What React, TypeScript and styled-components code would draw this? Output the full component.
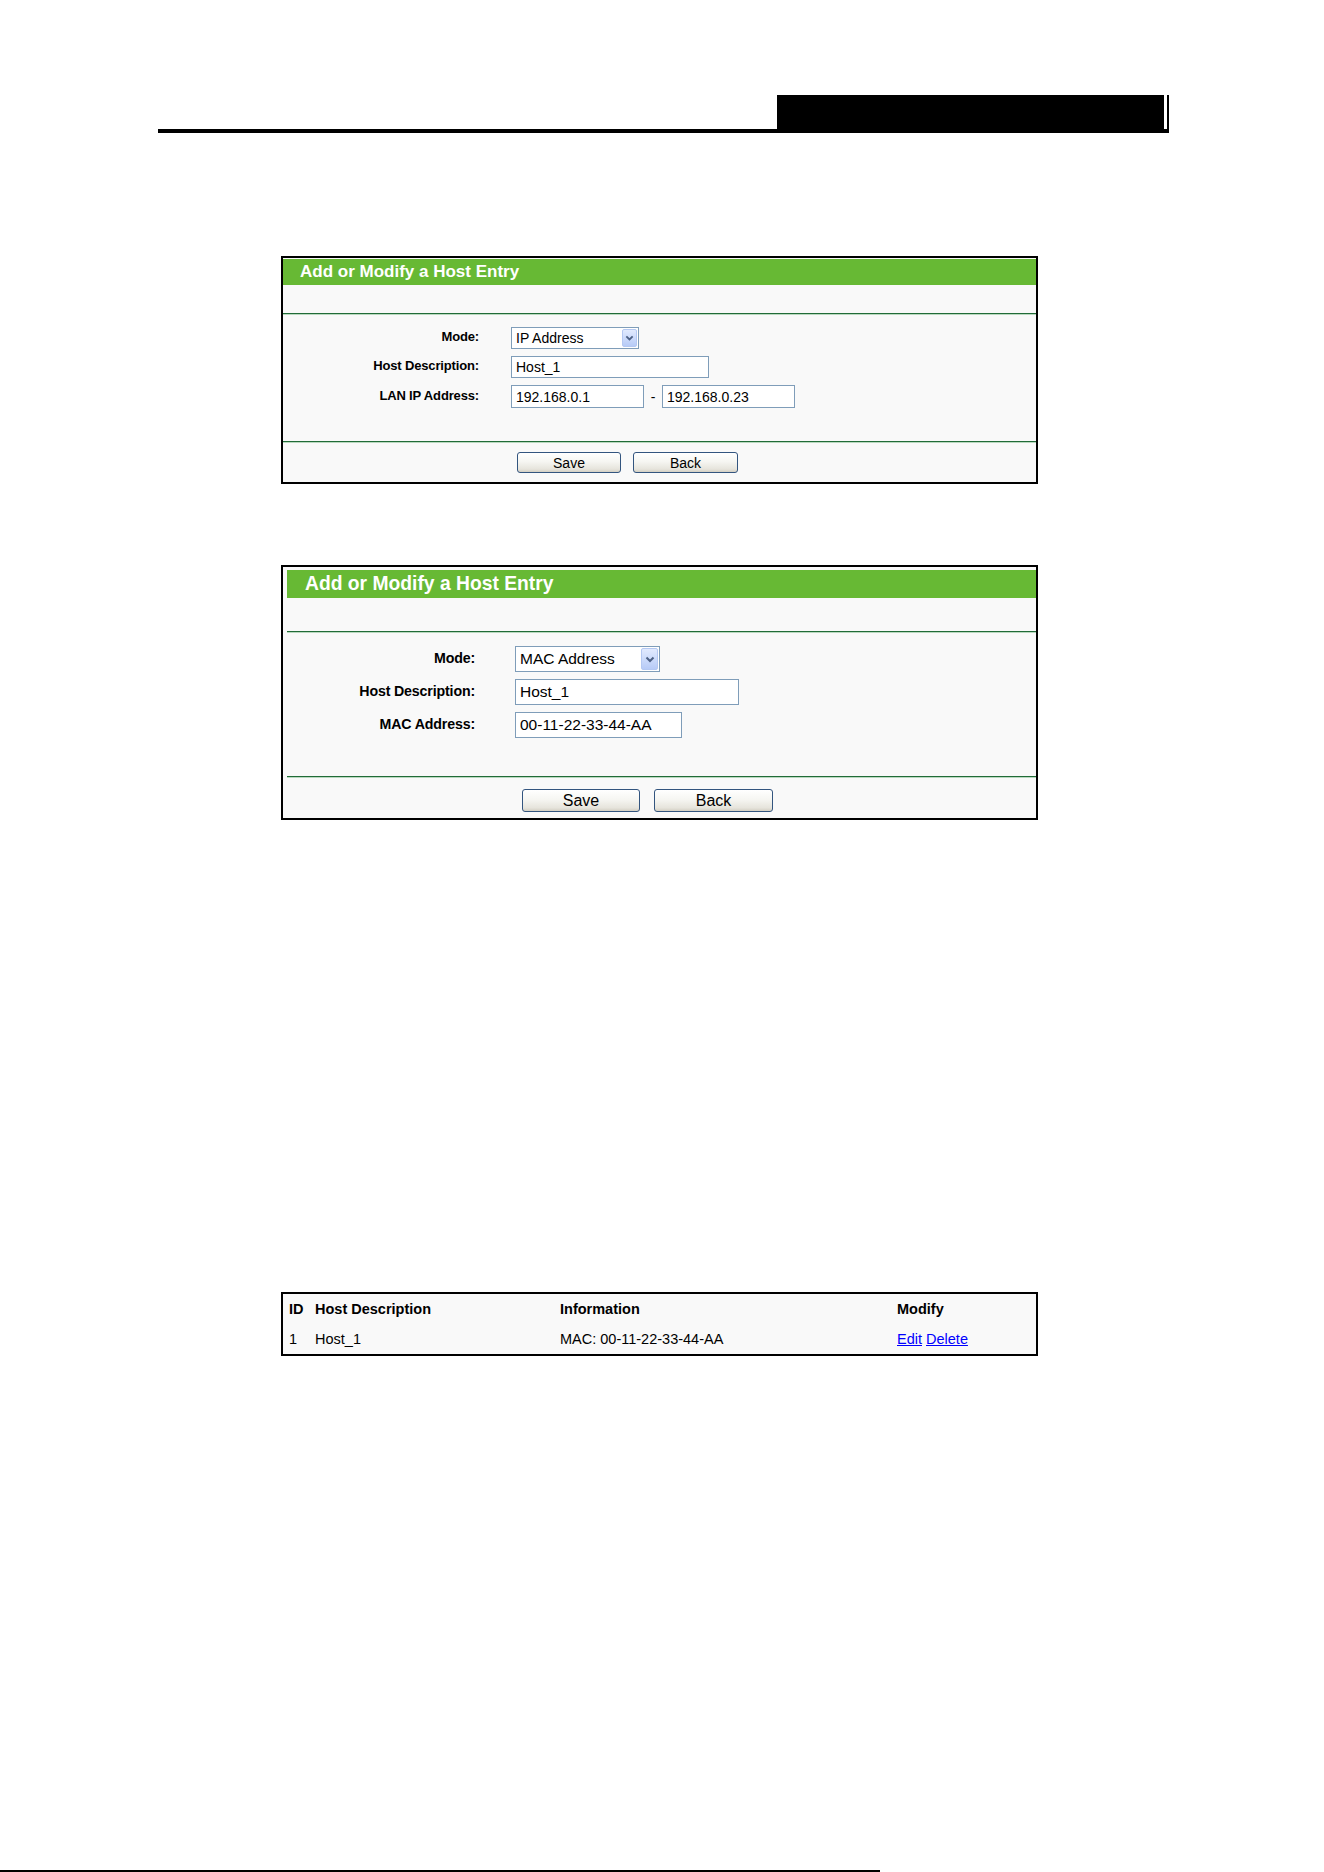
import styled, { createGlobalStyle } from 'styled-components';

const GlobalStyle = createGlobalStyle`
  html, body {
    margin: 0;
    padding: 0;
    background: #fff;
  }
  body {
    font-family: "Liberation Sans", Arial, sans-serif;
    color: #000;
  }
`;

const Page = styled.div`
  width: 1324px;
  height: 1872px;
  overflow: hidden;
  display: flex;
  flex-direction: column;
`;

const Header = styled.header`
  margin: 95px 0 0 158px;
  width: 1011px;
  height: 34px;
  border-bottom: 4px solid #000;
  display: flex;
  justify-content: flex-end;
`;

const HeaderBlock = styled.div`
  width: 387px;
  background: #000;
`;

const HeaderTick = styled.div`
  width: 2px;
  margin-left: 3px;
  background: #000;
`;

const Panel = styled.section<{ $top: number; $pad: string }>`
  margin: ${p => p.$top}px 0 0 281px;
  width: 757px;
  box-sizing: border-box;
  border: 2px solid #000;
  background: #f9f9f9;
  padding: ${p => p.$pad};
`;

const TitleBar = styled.div<{ $h: number; $fs: number; $pl: number }>`
  height: ${p => p.$h}px;
  padding-left: ${p => p.$pl}px;
  background: #67b934;
  color: #fff;
  font-weight: 700;
  font-size: ${p => p.$fs}px;
  display: flex;
  align-items: center;
`;

const Spacer = styled.div<{ $h: number }>`
  height: ${p => p.$h}px;
`;

const Rule = styled.div`
  height: 1px;
  border-top: 1px solid #216b38;
  background: #b9d9bf;
`;

const Form = styled.div<{ $pt: number; $pb: number }>`
  padding: ${p => p.$pt}px 0 ${p => p.$pb}px;
  display: flex;
  flex-direction: column;
  gap: 7px;
`;

const Row = styled.div<{ $label: number; $gap: number }>`
  display: grid;
  grid-template-columns: ${p => p.$label}px auto;
  column-gap: ${p => p.$gap}px;
  align-items: center;
`;

const Label = styled.div<{ $fs: number }>`
  padding-bottom: 3px;
  text-align: right;
  font-weight: 700;
  font-size: ${p => p.$fs}px;
  letter-spacing: -0.15px;
`;

const Controls = styled.div`
  display: flex;
  align-items: center;
`;

const Field = styled.input<{ $w: number; $h: number; $fs: number }>`
  box-sizing: border-box;
  width: ${p => p.$w}px;
  height: ${p => p.$h}px;
  margin: 0;
  padding: 0 0 0 4px;
  border: 1px solid #7f9db9;
  background: #fff;
  font-family: inherit;
  font-size: ${p => p.$fs}px;
  color: #000;
  outline: none;
`;

const Dash = styled.span<{ $fs: number }>`
  width: 18px;
  text-align: center;
  font-size: ${p => p.$fs}px;
`;

const Select = styled.div<{ $w: number; $h: number; $fs: number }>`
  box-sizing: border-box;
  width: ${p => p.$w}px;
  height: ${p => p.$h}px;
  border: 1px solid #7f9db9;
  background: #fff;
  padding: 1px 1px 1px 4px;
  display: flex;
  align-items: center;
  justify-content: space-between;
  font-size: ${p => p.$fs}px;
`;

const DropButton = styled.span<{ $w: number }>`
  align-self: stretch;
  width: ${p => p.$w}px;
  box-sizing: border-box;
  border: 1px solid #b4c8f2;
  border-radius: 2px;
  background: linear-gradient(#e1eafe, #b7cbf7);
  display: flex;
  align-items: center;
  justify-content: center;
`;

const ButtonBar = styled.div<{ $pad: string; $gap: number }>`
  padding: ${p => p.$pad};
  display: flex;
  gap: ${p => p.$gap}px;
`;

const Button = styled.button<{ $w: number; $h: number; $fs: number }>`
  box-sizing: border-box;
  width: ${p => p.$w}px;
  height: ${p => p.$h}px;
  padding: 0;
  border: 1px solid #33557f;
  border-radius: 3px;
  background: linear-gradient(#ffffff 0%, #f6f6f2 45%, #e6e4dc 85%, #d3cfc3 100%);
  font-family: inherit;
  font-size: ${p => p.$fs}px;
  color: #000;
`;

const Table = styled.div`
  margin: 472px 0 0 281px;
  width: 757px;
  box-sizing: border-box;
  border: 2px solid #000;
  background: #f9f9f9;
  padding-left: 6px;
  font-size: 14.5px;
`;

const TableRow = styled.div<{ $head?: boolean }>`
  display: grid;
  grid-template-columns: 26px 245px 337px 1fr;
  height: 30px;
  align-items: center;
  font-weight: ${p => (p.$head ? 700 : 400)};
`;

const Link = styled.a`
  color: #0000ff;
  text-decoration: underline;
`;

const FooterLine = styled.div`
  margin-top: 514px;
  width: 880px;
  height: 2px;
  background: #000;
`;

const Chevron = ({ size }: { size: number }) => (
  <svg width={size} height={size * 0.7} viewBox="0 0 10 7">
    <path d="M1.5 1.5 L5 5 L8.5 1.5" fill="none" stroke="#4d6185" strokeWidth="2" />
  </svg>
);

type Dim = {
  title: number;
  titleH: number;
  titlePl: number;
  label: number;
  labelW: number;
  gap: number;
  field: number;
};

// the two screenshots in the reference are pasted at slightly different scales
const small: Dim = { title: 17, titleH: 26, titlePl: 17, label: 13, labelW: 196, gap: 32, field: 14 };
const large: Dim = { title: 19.3, titleH: 28, titlePl: 18, label: 14.2, labelW: 188, gap: 40, field: 15.5 };

const App = () => {
  return (
    <Page>
      <GlobalStyle />
      <Header>
        <HeaderBlock />
        <HeaderTick />
      </Header>

      <Panel $top={123} $pad="1px 0 0 0">
        <TitleBar $h={small.titleH} $fs={small.title} $pl={small.titlePl}>Add or Modify a Host Entry</TitleBar>
        <Spacer $h={28} />
        <Rule />
        <Form $pt={12} $pb={33}>
          <Row $label={small.labelW} $gap={small.gap}>
            <Label $fs={small.label}>Mode:</Label>
            <Controls>
              <Select $w={128} $h={22} $fs={small.field}>
                IP Address
                <DropButton $w={15}><Chevron size={9} /></DropButton>
              </Select>
            </Controls>
          </Row>
          <Row $label={small.labelW} $gap={small.gap}>
            <Label $fs={small.label}>Host Description:</Label>
            <Controls>
              <Field $w={198} $h={22} $fs={small.field} defaultValue="Host_1" readOnly />
            </Controls>
          </Row>
          <Row $label={small.labelW} $gap={small.gap}>
            <Label $fs={small.label}>LAN IP Address:</Label>
            <Controls>
              <Field $w={133} $h={23} $fs={small.field} defaultValue="192.168.0.1" readOnly />
              <Dash $fs={small.field}>-</Dash>
              <Field $w={133} $h={23} $fs={small.field} defaultValue="192.168.0.23" readOnly />
            </Controls>
          </Row>
        </Form>
        <Rule />
        <ButtonBar $pad="9px 0 9px 234px" $gap={12}>
          <Button $w={104} $h={21} $fs={14}>Save</Button>
          <Button $w={105} $h={21} $fs={14}>Back</Button>
        </ButtonBar>
      </Panel>

      <Panel $top={81} $pad="3px 0 0 4px">
        <TitleBar $h={large.titleH} $fs={large.title} $pl={large.titlePl}>Add or Modify a Host Entry</TitleBar>
        <Spacer $h={33} />
        <Rule />
        <Form $pt={13} $pb={38}>
          <Row $label={large.labelW} $gap={large.gap}>
            <Label $fs={large.label}>Mode:</Label>
            <Controls>
              <Select $w={145} $h={26} $fs={large.field}>
                MAC Address
                <DropButton $w={17}><Chevron size={10} /></DropButton>
              </Select>
            </Controls>
          </Row>
          <Row $label={large.labelW} $gap={large.gap}>
            <Label $fs={large.label}>Host Description:</Label>
            <Controls>
              <Field $w={224} $h={26} $fs={large.field} defaultValue="Host_1" readOnly />
            </Controls>
          </Row>
          <Row $label={large.labelW} $gap={large.gap}>
            <Label $fs={large.label}>MAC Address:</Label>
            <Controls>
              <Field $w={167} $h={26} $fs={large.field} defaultValue="00-11-22-33-44-AA" readOnly />
            </Controls>
          </Row>
        </Form>
        <Rule />
        <ButtonBar $pad="11px 0 6px 235px" $gap={14}>
          <Button $w={118} $h={23} $fs={16}>Save</Button>
          <Button $w={119} $h={23} $fs={16}>Back</Button>
        </ButtonBar>
      </Panel>

      <Table>
        <TableRow $head>
          <span>ID</span>
          <span>Host Description</span>
          <span>Information</span>
          <span>Modify</span>
        </TableRow>
        <TableRow>
          <span>1</span>
          <span>Host_1</span>
          <span>MAC: 00-11-22-33-44-AA</span>
          <span>
            <Link href="#edit">Edit</Link> <Link href="#delete">Delete</Link>
          </span>
        </TableRow>
      </Table>

      <FooterLine />
    </Page>
  );
};

export default App;
